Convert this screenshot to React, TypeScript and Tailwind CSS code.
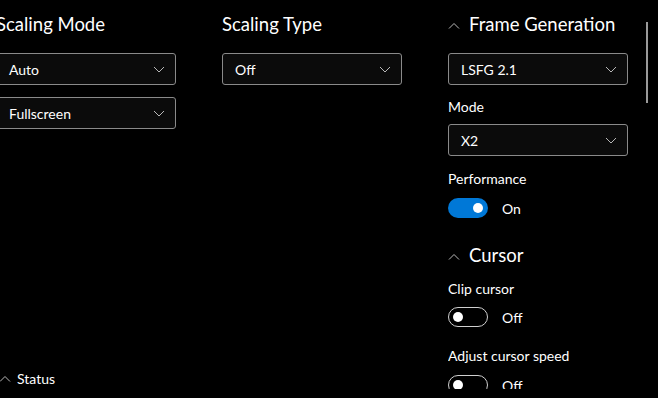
import { ReactNode } from "react";

const font = { fontFamily: 'Lato, "Noto Sans", sans-serif' };

function Chevron({ up = false }: { up?: boolean }) {
    return (
        <svg width="12" height="7" viewBox="0 0 12 7" className="shrink-0">
            <path
                d={up ? "M1 6.5 L6 1.5 L11 6.5" : "M1 1 L6 6 L11 1"}
                fill="none"
                stroke="#b8b8b8"
                strokeWidth="1"
            />
        </svg>
    );
}

function Dropdown({ value }: { value: string }) {
    return (
        <div className="flex h-[32px] w-[180px] items-center justify-between rounded-[3px] border border-[#8a8a8a] bg-[#0b0b0b] pl-[12px] pr-[10px] text-[14px] text-white">
            <span>{value}</span>
            <Chevron />
        </div>
    );
}

function Toggle({ on }: { on: boolean }) {
    return (
        <div className="flex h-[20px] items-center gap-[14px]">
            {on ? (
                <div className="flex h-[20px] w-[40px] items-center justify-end rounded-full bg-[#0078d7] pr-[5px]">
                    <div className="h-[10px] w-[10px] rounded-full bg-white" />
                </div>
            ) : (
                <div className="flex h-[20px] w-[40px] items-center rounded-full border-[1.5px] border-[#d0d0d0] pl-[4px]">
                    <div className="h-[10px] w-[10px] rounded-full bg-white" />
                </div>
            )}
            <span className="text-[14px] text-white">{on ? "On" : "Off"}</span>
        </div>
    );
}

function Header({ children, chevron = false }: { children: ReactNode; chevron?: boolean }) {
    return (
        <div className="flex h-[28px] items-center gap-[9px] whitespace-nowrap text-[18.5px] text-white">
            {chevron && <Chevron up />}
            <span>{children}</span>
        </div>
    );
}

function Label({ children }: { children: ReactNode }) {
    return <div className="text-[14px] leading-[20px] text-white">{children}</div>;
}

export default function App() {
    return (
        <div style={font} className="flex h-[398px] w-[658px] overflow-hidden bg-black">
            {/* left part: two columns and the status footer */}
            <div className="ml-[-4px] flex h-full flex-col justify-between pt-[11px] pb-[9px]">
                <div className="flex gap-[46px]">
                    <div className="flex w-[180px] flex-col">
                        <Header>Scaling Mode</Header>
                        <div className="mt-[14px] flex flex-col gap-[12px]">
                            <Dropdown value="Auto" />
                            <Dropdown value="Fullscreen" />
                        </div>
                    </div>
                    <div className="flex w-[180px] flex-col">
                        <Header>Scaling Type</Header>
                        <div className="mt-[14px]">
                            <Dropdown value="Off" />
                        </div>
                    </div>
                </div>
                <div className="flex items-center gap-[6px] pl-[3px] text-[14px] text-white">
                    <Chevron up />
                    <span>Status</span>
                </div>
            </div>

            {/* right scroll panel */}
            <div className="relative ml-[46px] h-[389px] w-[210px] overflow-hidden pt-[11px]">
                <div className="flex w-[180px] flex-col">
                    <Header chevron>Frame Generation</Header>
                    <div className="mt-[14px]">
                        <Dropdown value="LSFG 2.1" />
                    </div>
                    <div className="mt-[12px]">
                        <Label>Mode</Label>
                    </div>
                    <div className="mt-[7px]">
                        <Dropdown value="X2" />
                    </div>
                    <div className="mt-[13px]">
                        <Label>Performance</Label>
                    </div>
                    <div className="mt-[9px]">
                        <Toggle on />
                    </div>
                    <div className="mt-[24px]">
                        <Header chevron>Cursor</Header>
                    </div>
                    <div className="mt-[9px]">
                        <Label>Clip cursor</Label>
                    </div>
                    <div className="mt-[8px]">
                        <Toggle on={false} />
                    </div>
                    <div className="mt-[19px]">
                        <Label>Adjust cursor speed</Label>
                    </div>
                    <div className="mt-[9px]">
                        <Toggle on={false} />
                    </div>
                </div>
                <div className="absolute left-[198px] top-[22px] h-[81px] w-[2px] bg-[#9a9a9a]" />
            </div>
        </div>
    );
}
